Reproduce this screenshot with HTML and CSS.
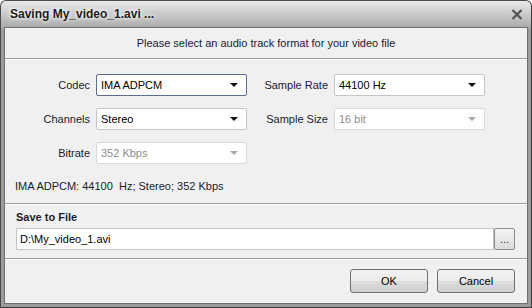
FILE: index.html
```html
<!DOCTYPE html>
<html lang="en">

<head>
    <meta charset="UTF-8">
    <title>Saving My_video_1.avi ...</title>
    <link rel="stylesheet" href="styles.css">
</head>

<body>
    <div class="window">
        <div class="titlebar">
            <span class="title">Saving My_video_1.avi ...</span>
            <svg class="close" width="12" height="11" viewBox="0 0 12 11">
                <path d="M1.5 1 L10.5 10 M10.5 1 L1.5 10" stroke="#555" stroke-width="2.3" fill="none"/>
            </svg>
        </div>
        <div class="panel">
            <div class="header">Please select an audio track format for your video file</div>
            <div class="form">
                <div class="label">Codec</div>
                <div class="combo focused"><span>IMA ADPCM</span><i class="arrow"></i></div>
                <div class="label">Sample Rate</div>
                <div class="combo"><span>44100 Hz</span><i class="arrow"></i></div>

                <div class="label">Channels</div>
                <div class="combo"><span>Stereo</span><i class="arrow"></i></div>
                <div class="label">Sample Size</div>
                <div class="combo disabled"><span>16 bit</span><i class="arrow"></i></div>

                <div class="label">Bitrate</div>
                <div class="combo disabled"><span>352 Kbps</span><i class="arrow"></i></div>
            </div>
            <div class="info">IMA ADPCM: 44100&nbsp; Hz; Stereo; 352 Kbps</div>
            <div class="save">
                <div class="save-title">Save to File</div>
                <div class="file-row">
                    <div class="file-input">D:\My_video_1.avi</div>
                    <div class="browse">...</div>
                </div>
            </div>
            <div class="footer">
                <div class="btn">OK</div>
                <div class="btn">Cancel</div>
            </div>
        </div>
    </div>
</body>

</html>
```

FILE: styles.css
```css
body {
    margin: 0;
    background: #ffffff;
    font-family: "Liberation Sans", Arial, sans-serif;
    font-size: 11px;
    color: #1b1b2e;
}
.window {
    width: 530px;
    height: 306px;
    border: 1px solid #4a4a4a;
    border-right-color: #3a3a3a;
    border-bottom-color: #3a3a3a;
    border-radius: 6px 6px 0 0;
    background: linear-gradient(#e9e9e9, #a9a9a9 27px, #9c9c9c 28px, #9c9c9c);
    display: flex;
    flex-direction: column;
}
.titlebar {
    height: 26px;
    display: flex;
    align-items: center;
    justify-content: space-between;
    padding: 0 8px 0 9px;
}
.title {
    font-weight: bold;
    font-size: 12px;
    color: #1a1a1a;
    text-shadow: 0 0 5px #fff, 0 0 3px #fff;
}
.close { margin-top: 1px; }
.panel {
    flex: 1;
    margin: 0 3px 3px 3px;
    border: 1px solid #6f6f6f;
    background: #f0f0f0;
    display: flex;
    flex-direction: column;
}
.header {
    height: 30px;
    line-height: 30px;
    text-align: center;
    border-bottom: 1px solid #a0a0a0;
    box-shadow: 0 1px 0 #fff;
}
.form {
    display: grid;
    grid-template-columns: 85px 151px 75px 151px;
    grid-auto-rows: 22px;
    column-gap: 6px;
    row-gap: 12px;
    padding-top: 15px;
}
.label {
    text-align: right;
    line-height: 22px;
}
.combo {
    background: #fff;
    border: 1px solid #c6c6c6;
    border-radius: 2px;
    display: flex;
    align-items: center;
    justify-content: space-between;
    padding: 0 8px 0 4px;
    color: #000;
}
.combo.focused { border-color: #5c6b92; }
.arrow {
    width: 0;
    height: 0;
    border-left: 4px solid transparent;
    border-right: 4px solid transparent;
    border-top: 4px solid #111;
}
.combo.disabled { color: #8d8d8d; border-color: #d9d9d9; }
.combo.disabled .arrow { border-top-color: #a8a8a8; }
.info {
    padding: 15px 0 0 10px;
    height: 24px;
    line-height: 14px;
    border-bottom: 1px solid #a0a0a0;
    box-shadow: 0 1px 0 #fff;
}
.save { padding: 6px 12px 8px 11px; border-bottom: 1px solid #a0a0a0; box-shadow: 0 1px 0 #fff; }
.save-title { font-weight: bold; line-height: 14px; margin-bottom: 4px; }
.file-row { display: flex; height: 22px; }
.file-input {
    flex: 1;
    background: #fff;
    border: 1px solid #c4c4c4;
    padding: 0 3px;
    line-height: 20px;
    color: #000;
}
.browse {
    width: 19px;
    border: 1px solid #8c8c8c;
    border-radius: 2px;
    background: linear-gradient(#f4f4f4, #dcdcdc);
    text-align: center;
    line-height: 20px;
}
.footer {
    flex: 1;
    display: flex;
    justify-content: flex-end;
    align-items: center;
    gap: 9px;
    padding: 0 12px 0 0;
}
.btn {
    width: 76px;
    height: 22px;
    line-height: 22px;
    text-align: center;
    border: 1px solid #707070;
    border-radius: 3px;
    background: linear-gradient(#f2f2f2 0, #ebebeb 50%, #dddddd 51%, #cfcfcf);
    color: #000;
}
```
